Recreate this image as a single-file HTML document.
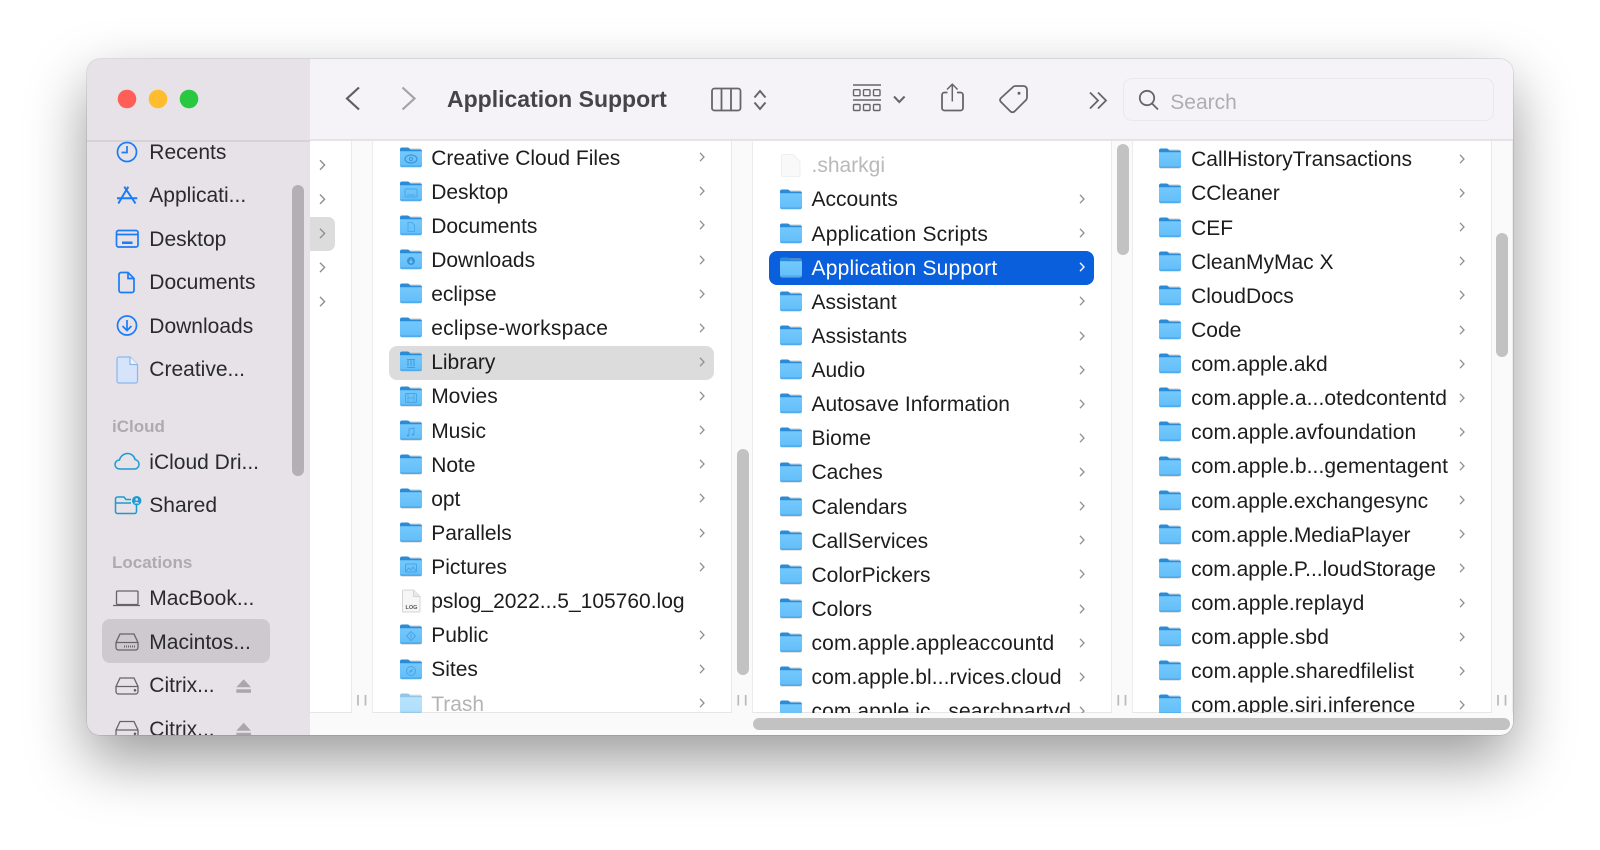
<!DOCTYPE html>
<html><head><meta charset="utf-8"><title>Application Support</title>
<style>
*{box-sizing:border-box}
html,body{margin:0;width:1600px;height:850px;background:#fff;overflow:hidden;font-family:"Liberation Sans",sans-serif}
#w{position:absolute;left:87px;top:59px;width:1426px;height:676px;border-radius:13px;background:#fff;box-shadow:0 25px 60px rgba(0,0,0,.4),0 0 1px rgba(0,0,0,.55)}
#c{position:absolute;left:0;top:0;width:1426px;height:676px;border-radius:13px;overflow:hidden}
#p{position:absolute;left:-87px;top:-59px;width:1600px;height:850px}
.a{position:absolute}
.strip{position:absolute;top:140px;height:573px;width:22px;background:#fafafa;border-left:1px solid #e9e9e9;border-right:1px solid #ececec}
.sb{position:absolute;background:#c2c2c2;border-radius:6px}
.col{position:absolute;top:140px;height:573px;width:325px;overflow:hidden}
.r{position:relative;height:34.13px;font-size:21px;color:#1d1d1f}
.r span{position:absolute;left:42.2px;top:1.4px;line-height:34px;white-space:nowrap}
.r .i{position:absolute;left:11px;top:6.5px;width:22px;height:21px}
.r .c{position:absolute;left:310px;top:12px;width:6px;height:10px}
.sel::before,.blue::before{content:"";position:absolute;left:0;right:0;top:1px;height:33.6px;border-radius:8px}
.sel::before{background:#dcdcdc}
.blue::before{background:#0a5fdd}
.blue{color:#fff}
.s{position:absolute;left:149.3px;font-size:21px;line-height:30px;color:#2a2a2c;white-space:nowrap}
.h{position:absolute;left:112px;font-size:17px;font-weight:bold;line-height:20px;color:#aeabb0}
</style></head><body>
<svg width="0" height="0" style="position:absolute"><defs>
<linearGradient id="gb" x1="0" y1="0" x2="0" y2="1"><stop offset="0" stop-color="#74c9fc"/><stop offset="1" stop-color="#62bdf8"/></linearGradient>
<g id="f"><rect x=".3" y="1.2" width="21.4" height="19.6" rx="2" fill="#b9bcc0" opacity=".55"/><path d="M0 2.5a2 2 0 0 1 2-2h5.500c.8 0 1.200.3 1.800.9L10.500 2.500H20a2 2 0 0 1 2 2v3H0z" fill="#2a8cd9"/><path d="M0 4.300h22V18a2 2 0 0 1-2 2H2a2 2 0 0 1-2-2z" fill="url(#gb)"/><path d="M0 18.400h22a2 2 0 0 1-2 1.600H2a2 2 0 0 1-2-1.600z" fill="#4fabeb"/></g>
<g id="c"><path d="M1 .8l4 4.200-4 4.200" fill="none" stroke="#8f8f8f" stroke-width="1.300"/></g>
<g id="cw"><path d="M1 .8l4 4.200-4 4.200" fill="none" stroke="#fff" stroke-width="1.400"/></g>
</defs></svg>
<div id="w"><div id="c"><div id="p">
<!-- toolbar and sidebar backgrounds -->
<div class="a" style="left:310px;top:59px;width:1203px;height:82px;background:#f6f3f8;border-bottom:2px solid #e5e3e6"></div>
<div class="a" style="left:87px;top:59px;width:223px;height:676px;background:#e6e2e7"></div>
<div class="a" style="left:87px;top:139.500px;width:223px;height:2px;background:#d6d3d7"></div>
<!-- bottom bar -->
<div class="a" style="left:310px;top:712px;width:1203px;height:23px;background:#fafafa;border-top:1px solid #e6e6e6"></div>
<div class="sb" style="left:753px;top:718px;width:757px;height:12px"></div>
<!-- dividers -->
<div class="strip" style="left:351px;top:141px;height:572px"></div>
<div class="strip" style="left:731px;top:141px;height:572px"></div>
<div class="strip" style="left:1111px;top:141px;height:572px"></div>
<div class="strip" style="left:1491px;top:141px;height:572px"></div>
<!-- column scrollbars -->
<div class="sb" style="left:737px;top:449px;width:11.500px;height:226px"></div>
<div class="sb" style="left:1117px;top:144px;width:11.500px;height:111px"></div>
<div class="sb" style="left:1496px;top:233px;width:11.500px;height:124px"></div>
<div class="a" style="left:292px;top:185px;width:12px;height:291px;background:#b3afb3;border-radius:6px"></div>
<div class="a" style="left:310px;top:216.700px;width:25px;height:34.300px;background:#dcdcdc;border-radius:0 7px 7px 0"></div>
<div class="a" style="left:102.300px;top:619.300px;width:167.700px;height:43.400px;background:#cdc9ce;border-radius:8px"></div>

<!-- column 2 -->
<div class="col" style="left:389px;top:141px;height:572px"><div style="height:.2px;margin-top:-1px"></div>
<div class="r"><svg class="i" viewBox="0 0 22 21"><use href="#f"/><ellipse cx="11" cy="12" rx="6" ry="4" fill="none" stroke="#3b97dc" stroke-width="1.200"/><circle cx="11" cy="12" r="1.600" fill="none" stroke="#3b97dc"/></svg><span>Creative Cloud Files</span><svg class="c"><use href="#c"/></svg></div>
<div class="r"><svg class="i" viewBox="0 0 22 21"><use href="#f"/><rect x="5" y="8" width="12" height="8" rx="1" fill="none" stroke="#4aa5e6"/><path d="M7 14h8" stroke="#4aa5e6"/></svg><span>Desktop</span><svg class="c"><use href="#c"/></svg></div>
<div class="r"><svg class="i" viewBox="0 0 22 21"><use href="#f"/><path d="M8 7.500h4l2.500 2.500v6.500H8z" fill="none" stroke="#50aaea"/></svg><span>Documents</span><svg class="c"><use href="#c"/></svg></div>
<div class="r"><svg class="i" viewBox="0 0 22 21"><use href="#f"/><circle cx="11" cy="12" r="4" fill="#3a95d8"/><path d="M11 10v3.600M9.500 12.400l1.500 1.400 1.500-1.400" stroke="#9bd8fb" fill="none" stroke-width=".8"/></svg><span>Downloads</span><svg class="c"><use href="#c"/></svg></div>
<div class="r"><svg class="i" viewBox="0 0 22 21"><use href="#f"/></svg><span>eclipse</span><svg class="c"><use href="#c"/></svg></div>
<div class="r"><svg class="i" viewBox="0 0 22 21"><use href="#f"/></svg><span style="letter-spacing:.25px">eclipse-workspace</span><svg class="c"><use href="#c"/></svg></div>
<div class="r sel"><svg class="i" viewBox="0 0 22 21"><use href="#f"/><path d="M7 16.500h8M8 9v6M11 9v6M14 9v6M7 8.500h8" stroke="#439cdf" stroke-width="1.100" fill="none"/></svg><span>Library</span><svg class="c"><use href="#c"/></svg></div>
<div class="r"><svg class="i" viewBox="0 0 22 21"><use href="#f"/><rect x="5.500" y="7.500" width="11" height="9" rx="1" fill="none" stroke="#4aa5e6"/><path d="M8 7.500v9M14 7.500v9M8 12h6" stroke="#4aa5e6" stroke-width=".8"/></svg><span>Movies</span><svg class="c"><use href="#c"/></svg></div>
<div class="r"><svg class="i" viewBox="0 0 22 21"><use href="#f"/><path d="M9 15.500V9l5-1v6.500" fill="none" stroke="#4aa5e6"/><circle cx="8" cy="15.500" r="1.200" fill="#4aa5e6"/><circle cx="13" cy="14.500" r="1.200" fill="#4aa5e6"/></svg><span>Music</span><svg class="c"><use href="#c"/></svg></div>
<div class="r"><svg class="i" viewBox="0 0 22 21"><use href="#f"/></svg><span>Note</span><svg class="c"><use href="#c"/></svg></div>
<div class="r"><svg class="i" viewBox="0 0 22 21"><use href="#f"/></svg><span>opt</span><svg class="c"><use href="#c"/></svg></div>
<div class="r"><svg class="i" viewBox="0 0 22 21"><use href="#f"/></svg><span>Parallels</span><svg class="c"><use href="#c"/></svg></div>
<div class="r"><svg class="i" viewBox="0 0 22 21"><use href="#f"/><rect x="5.500" y="8" width="11" height="8" rx="1" fill="none" stroke="#4aa5e6"/><path d="M6 15l3-3 2 2 2-3 3 4" fill="none" stroke="#4aa5e6"/></svg><span>Pictures</span><svg class="c"><use href="#c"/></svg></div>
<div class="r"><svg class="i" style="left:11.500px;top:5px;width:21px;height:24px" viewBox="0 0 21 24"><path d="M2.500 1h10l6.500 6.500V22a1 1 0 0 1-1 1H2.500a1 1 0 0 1-1-1V2a1 1 0 0 1 1-1z" fill="#f6f6f6" stroke="#d4d4d4"/><path d="M12.500 1v6.500H19" fill="#e8e8e8" stroke="#d4d4d4"/><text x="10.500" y="20" font-size="5.500" font-weight="bold" text-anchor="middle" fill="#555" font-family="Liberation Sans">LOG</text></svg><span>pslog_2022...5_105760.log</span></div>
<div class="r"><svg class="i" viewBox="0 0 22 21"><use href="#f"/><path d="M11 7.500l4.500 4.500-4.500 4.500L6.500 12z" fill="none" stroke="#4aa5e6"/><path d="M11 10v4" stroke="#4aa5e6"/></svg><span>Public</span><svg class="c"><use href="#c"/></svg></div>
<div class="r"><svg class="i" viewBox="0 0 22 21"><use href="#f"/><circle cx="11" cy="12" r="4.500" fill="none" stroke="#4aa5e6"/><path d="M13 10l-3 1.200-1 2.800 3-1.200z" fill="#4aa5e6"/></svg><span>Sites</span><svg class="c"><use href="#c"/></svg></div>
<div class="r" style="color:#b4b4b4"><svg class="i" viewBox="0 0 22 21" style="opacity:.5"><use href="#f"/></svg><span>Trash</span><svg class="c"><use href="#c"/></svg></div>
</div>

<!-- column 3 -->
<div class="col" style="left:769.300px;top:141px;height:572px"><div style="height:6.900px"></div>
<div class="r" style="color:#b9b9b9"><svg class="i" style="left:11.500px;top:6px;width:20px;height:23px" viewBox="0 0 20 23"><path d="M2 .5h10l7 7V21a1.500 1.500 0 0 1-1.500 1.500H2A1.500 1.500 0 0 1 .5 21V2A1.500 1.500 0 0 1 2 .5z" fill="#f9f9f9" stroke="#efefef"/></svg><span>.sharkgi</span></div>
<div class="r"><svg class="i" viewBox="0 0 22 21"><use href="#f"/></svg><span>Accounts</span><svg class="c"><use href="#c"/></svg></div>
<div class="r"><svg class="i" viewBox="0 0 22 21"><use href="#f"/></svg><span style="letter-spacing:.2px">Application Scripts</span><svg class="c"><use href="#c"/></svg></div>
<div class="r blue"><svg class="i" viewBox="0 0 22 21"><use href="#f"/></svg><span style="letter-spacing:.2px">Application Support</span><svg class="c"><use href="#cw"/></svg></div>
<div class="r"><svg class="i" viewBox="0 0 22 21"><use href="#f"/></svg><span>Assistant</span><svg class="c"><use href="#c"/></svg></div>
<div class="r"><svg class="i" viewBox="0 0 22 21"><use href="#f"/></svg><span>Assistants</span><svg class="c"><use href="#c"/></svg></div>
<div class="r"><svg class="i" viewBox="0 0 22 21"><use href="#f"/></svg><span>Audio</span><svg class="c"><use href="#c"/></svg></div>
<div class="r"><svg class="i" viewBox="0 0 22 21"><use href="#f"/></svg><span>Autosave Information</span><svg class="c"><use href="#c"/></svg></div>
<div class="r"><svg class="i" viewBox="0 0 22 21"><use href="#f"/></svg><span>Biome</span><svg class="c"><use href="#c"/></svg></div>
<div class="r"><svg class="i" viewBox="0 0 22 21"><use href="#f"/></svg><span>Caches</span><svg class="c"><use href="#c"/></svg></div>
<div class="r"><svg class="i" viewBox="0 0 22 21"><use href="#f"/></svg><span>Calendars</span><svg class="c"><use href="#c"/></svg></div>
<div class="r"><svg class="i" viewBox="0 0 22 21"><use href="#f"/></svg><span>CallServices</span><svg class="c"><use href="#c"/></svg></div>
<div class="r"><svg class="i" viewBox="0 0 22 21"><use href="#f"/></svg><span>ColorPickers</span><svg class="c"><use href="#c"/></svg></div>
<div class="r"><svg class="i" viewBox="0 0 22 21"><use href="#f"/></svg><span>Colors</span><svg class="c"><use href="#c"/></svg></div>
<div class="r"><svg class="i" viewBox="0 0 22 21"><use href="#f"/></svg><span style="letter-spacing:.15px">com.apple.appleaccountd</span><svg class="c"><use href="#c"/></svg></div>
<div class="r"><svg class="i" viewBox="0 0 22 21"><use href="#f"/></svg><span style="letter-spacing:.1px">com.apple.bl...rvices.cloud</span><svg class="c"><use href="#c"/></svg></div>
<div class="r"><svg class="i" viewBox="0 0 22 21"><use href="#f"/></svg><span style="letter-spacing:.1px">com.apple.ic...searchpartyd</span><svg class="c"><use href="#c"/></svg></div>
</div>

<!-- column 4 -->
<div class="col" style="left:1147.800px;top:141px;height:572px"><div style="height:.9px"></div>
<div class="r"><svg class="i" viewBox="0 0 22 21"><use href="#f"/></svg><span style="left:43.300px">CallHistoryTransactions</span><svg class="c" style="left:311px"><use href="#c"/></svg></div>
<div class="r"><svg class="i" viewBox="0 0 22 21"><use href="#f"/></svg><span style="left:43.300px">CCleaner</span><svg class="c" style="left:311px"><use href="#c"/></svg></div>
<div class="r"><svg class="i" viewBox="0 0 22 21"><use href="#f"/></svg><span style="left:43.300px">CEF</span><svg class="c" style="left:311px"><use href="#c"/></svg></div>
<div class="r"><svg class="i" viewBox="0 0 22 21"><use href="#f"/></svg><span style="left:43.300px">CleanMyMac X</span><svg class="c" style="left:311px"><use href="#c"/></svg></div>
<div class="r"><svg class="i" viewBox="0 0 22 21"><use href="#f"/></svg><span style="left:43.300px">CloudDocs</span><svg class="c" style="left:311px"><use href="#c"/></svg></div>
<div class="r"><svg class="i" viewBox="0 0 22 21"><use href="#f"/></svg><span style="left:43.300px">Code</span><svg class="c" style="left:311px"><use href="#c"/></svg></div>
<div class="r"><svg class="i" viewBox="0 0 22 21"><use href="#f"/></svg><span style="left:43.300px">com.apple.akd</span><svg class="c" style="left:311px"><use href="#c"/></svg></div>
<div class="r"><svg class="i" viewBox="0 0 22 21"><use href="#f"/></svg><span style="left:43.300px;letter-spacing:.1px">com.apple.a...otedcontentd</span><svg class="c" style="left:311px"><use href="#c"/></svg></div>
<div class="r"><svg class="i" viewBox="0 0 22 21"><use href="#f"/></svg><span style="left:43.300px;letter-spacing:.1px">com.apple.avfoundation</span><svg class="c" style="left:311px"><use href="#c"/></svg></div>
<div class="r"><svg class="i" viewBox="0 0 22 21"><use href="#f"/></svg><span style="left:43.300px;letter-spacing:.1px">com.apple.b...gementagent</span><svg class="c" style="left:311px"><use href="#c"/></svg></div>
<div class="r"><svg class="i" viewBox="0 0 22 21"><use href="#f"/></svg><span style="left:43.300px">com.apple.exchangesync</span><svg class="c" style="left:311px"><use href="#c"/></svg></div>
<div class="r"><svg class="i" viewBox="0 0 22 21"><use href="#f"/></svg><span style="left:43.300px">com.apple.MediaPlayer</span><svg class="c" style="left:311px"><use href="#c"/></svg></div>
<div class="r"><svg class="i" viewBox="0 0 22 21"><use href="#f"/></svg><span style="left:43.300px">com.apple.P...loudStorage</span><svg class="c" style="left:311px"><use href="#c"/></svg></div>
<div class="r"><svg class="i" viewBox="0 0 22 21"><use href="#f"/></svg><span style="left:43.300px;letter-spacing:.1px">com.apple.replayd</span><svg class="c" style="left:311px"><use href="#c"/></svg></div>
<div class="r"><svg class="i" viewBox="0 0 22 21"><use href="#f"/></svg><span style="left:43.300px;letter-spacing:.1px">com.apple.sbd</span><svg class="c" style="left:311px"><use href="#c"/></svg></div>
<div class="r"><svg class="i" viewBox="0 0 22 21"><use href="#f"/></svg><span style="left:43.300px;letter-spacing:.15px">com.apple.sharedfilelist</span><svg class="c" style="left:311px"><use href="#c"/></svg></div>
<div class="r"><svg class="i" viewBox="0 0 22 21"><use href="#f"/></svg><span style="left:43.300px;letter-spacing:.1px">com.apple.siri.inference</span><svg class="c" style="left:311px"><use href="#c"/></svg></div>
</div>

<!-- sidebar text -->
<div class="s" style="top:137.700px">Recents</div>
<div class="s" style="top:181.300px">Applicati...</div>
<div class="s" style="top:225px">Desktop</div>
<div class="s" style="top:268.300px">Documents</div>
<div class="s" style="top:311.500px">Downloads</div>
<div class="s" style="top:355.400px">Creative...</div>
<div class="h" style="top:417px">iCloud</div>
<div class="s" style="top:447.700px">iCloud Dri...</div>
<div class="s" style="top:491.300px">Shared</div>
<div class="h" style="top:553.300px">Locations</div>
<div class="s" style="top:584.300px">MacBook...</div>
<div class="s" style="top:627.700px">Macintos...</div>
<div class="s" style="top:671.300px">Citrix...</div>
<div class="s" style="top:715px">Citrix...</div>

<!-- toolbar text -->
<div class="a" style="left:447px;top:84px;font-size:23px;font-weight:bold;line-height:30px;color:#454448;white-space:nowrap">Application Support</div>
<div class="a" style="left:1123.300px;top:78.300px;width:371px;height:42.500px;border:1.500px solid #ebe8ec;border-radius:9px"></div>
<div class="a" style="left:1170.300px;top:88px;font-size:21px;line-height:30px;color:#aeadb1">Search</div>

<!-- all icons -->
<svg class="a" style="left:0;top:0" width="1600" height="850" viewBox="0 0 1600 850" fill="none">
<circle cx="127" cy="99" r="9.300" fill="#ff5f57"/><circle cx="158" cy="99" r="9.300" fill="#febc2e"/><circle cx="189" cy="99" r="9.300" fill="#28c840"/>
<path d="M359 87.500L347 98.500L359 109.500" stroke="#5e5e5e" stroke-width="2.200"/>
<path d="M402.500 87.500L414.500 98.500L402.500 109.500" stroke="#a3a3a3" stroke-width="2.200"/>
<g stroke="#666" stroke-width="1.800">
<rect x="712" y="88.500" width="28.500" height="22" rx="2.500"/><path d="M721.500 88.500v22M731 88.500v22"/>
<path d="M754.500 97.500l5.500-6.500 5.500 6.500M754.500 102.500l5.500 6.500 5.500-6.500" stroke-width="2"/>
<path d="M853 85h28M853 100h28" stroke-width="1.600"/>
<g stroke-width="1.400"><rect x="853.500" y="89.700" width="6.500" height="6" rx="1"/><rect x="863.500" y="89.700" width="6.500" height="6" rx="1"/><rect x="873.500" y="89.700" width="6.500" height="6" rx="1"/><rect x="853.500" y="104.500" width="6.500" height="6" rx="1"/><rect x="863.500" y="104.500" width="6.500" height="6" rx="1"/><rect x="873.500" y="104.500" width="6.500" height="6" rx="1"/></g>
<path d="M894 96.500l5.300 5.500 5.300-5.500" stroke-width="2"/>
<path d="M947.500 92.500H944.500a2.500 2.500 0 0 0-2.500 2.500V108a2.500 2.500 0 0 0 2.500 2.500H960.500a2.500 2.500 0 0 0 2.500-2.500V95a2.500 2.500 0 0 0-2.500-2.500H957"/>
<path d="M952.300 101.500V84.500M947 89.500l5.300-5.300 5.300 5.300" stroke-width="1.500"/>
<path d="M1015 86L1023 86Q1027 86 1027 90L1027 97.500Q1027 99 1026 100L1014.500 111.500Q1012.500 113 1010.500 111.500L1001 102Q999 100 1001 98L1013 87Q1014 86 1015 86Z"/>
<path d="M1090 92.500l8 8-8 8M1098 92.500l8 8-8 8"/>
<circle cx="1147" cy="98" r="7.200"/><path d="M1152 103.500l6 6"/>
</g>
<circle cx="1019" cy="93.300" r="1.500" fill="#666"/>
<!-- column 1 chevrons -->
<g stroke="#8f8f8f" stroke-width="1.400"><path d="M320 160.300l4.600 4.700-4.600 4.700M320 194.500l4.600 4.700-4.600 4.700M320 228.700l4.600 4.700-4.600 4.700M320 262.700l4.600 4.700-4.600 4.700M320 296.900l4.600 4.700-4.600 4.700"/></g>
<!-- grips -->
<g stroke="#b8b8b8" stroke-width="1.700"><path d="M358 695v10.500M365.500 695v10.500M738.300 695v10.500M745.700 695v10.500M1118.300 695v10.500M1125.500 695v10.500M1498 695v10.500M1505.500 695v10.500"/></g>
<!-- sidebar blue -->
<g stroke="#1b7cf6" stroke-width="1.700">
<circle cx="127" cy="152" r="9.500"/><path d="M127 146v6.500h-5.500"/>
<path d="M118.300 203.500L128.300 186.700M135.500 203.500L124.300 186.700M117 198.300h20.300" stroke-width="2"/>
<rect x="116.500" y="230.500" width="21.500" height="16.500" rx="2"/><path d="M116.500 234.500h21.500"/>
<path d="M121 272.500h7l6 6v12a2 2 0 0 1-2 2h-11a2 2 0 0 1-2-2v-16a2 2 0 0 1 2-2z"/><path d="M128 272.500v6h6"/>
<circle cx="127" cy="325.500" r="9.500"/><path d="M127 320v10.500M122.500 326l4.500 4.500 4.500-4.500"/>
</g>
<rect x="122" y="241.500" width="10.500" height="2.500" fill="#1b7cf6"/>
<path d="M119 357h11l7.500 7.500V381a2 2 0 0 1-2 2H119a2 2 0 0 1-2-2V359a2 2 0 0 1 2-2z" fill="#d5e4fa" stroke="#8ab6ee" stroke-width="1.200"/><path d="M130 357v7.500h7.500" fill="#eef4fd" stroke="#8ab6ee" stroke-width="1.200"/>
<!-- sidebar teal -->
<g stroke="#1b9bd0" stroke-width="1.500">
<path d="M120 469C116.500 469 115 466.500 115 464.500C115 462 117 460 119.500 460C120.500 456 124 453.500 127.500 453.500C131.500 453.500 134.500 456.500 135 459.500C137.500 460 139 462 139 464.500C139 467 137 469 134.500 469Z"/>
<path d="M131 499.500h-5l-2-2.500h-6.500a2 2 0 0 0-2 2v12.500a2 2 0 0 0 2 2h17a2 2 0 0 0 2-2v-7M115.500 503H131"/>
</g>
<circle cx="136.700" cy="500.700" r="4.700" fill="#1b9bd0"/><circle cx="136.700" cy="499.500" r="1.300" fill="#e6e2e7"/><path d="M134.300 503.500a2.500 2 0 0 1 4.800 0z" fill="#e6e2e7"/>
<!-- locations -->
<g stroke="#666467" stroke-width="1.300">
<rect x="116.500" y="591" width="21.500" height="13.500" rx="1"/><path d="M113 605.500h27"/>
<path d="M120 634h14l4 8.500v5a2.500 2.500 0 0 1-2.500 2.500h-17a2.500 2.500 0 0 1-2.500-2.500v-5zM116 642.500h22"/>
<path d="M124 646.500h11" stroke-dasharray="1 1" stroke-width="2"/>
<path d="M120 678h14l4 8.500v5a2.500 2.500 0 0 1-2.500 2.500h-17a2.500 2.500 0 0 1-2.500-2.500v-5zM116 686.500h22"/>
<path d="M120 721.500h14l4 8.500v5a2.500 2.500 0 0 1-2.500 2.500h-17a2.500 2.500 0 0 1-2.500-2.500v-5zM116 730h22"/>
</g>
<circle cx="135" cy="690.300" r="1.300" fill="#5f5d60"/><circle cx="135" cy="733.800" r="1.300" fill="#5f5d60"/>
<g fill="#a9a7ab"><path d="M236.300 687.300L243.700 679.300L251 687.300Z"/><rect x="236.300" y="689.300" width="14.700" height="3.500"/><path d="M236.300 730.800L243.700 722.800L251 730.800Z"/><rect x="236.300" y="732.800" width="14.700" height="3.500"/></g>
</svg>
</div></div></div>
</body></html>
